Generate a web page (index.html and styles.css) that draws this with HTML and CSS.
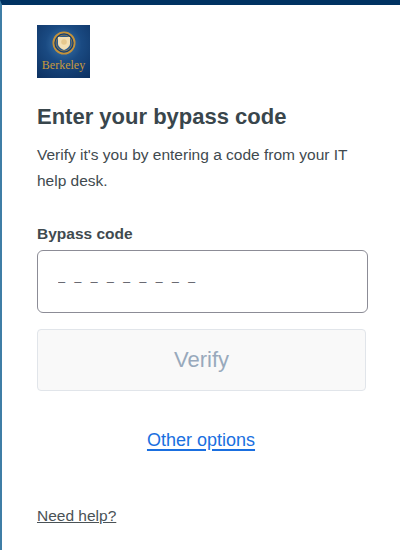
FILE: index.html
```html
<!DOCTYPE html>
<html lang="en">
<head>
<meta charset="utf-8">
<title>Enter your bypass code</title>
<link rel="stylesheet" href="styles.css">
</head>
<body>
<main class="card">
  <div class="logo">
    <svg class="seal" viewBox="0 0 28 28" aria-hidden="true">
      <circle cx="14" cy="14" r="10.600" fill="#123f76" stroke="#c4923a" stroke-width="1.800"/>
      <circle cx="14" cy="14" r="8" fill="#2c5a8c" stroke="#a9853f" stroke-width="0.700"/>
      <path d="M8 8h12v6.500c0 3.200-3 5.200-6 6.500-3-1.300-6-3.300-6-6.500z" fill="#f3dfb4"/>
      <circle cx="14" cy="13" r="2.800" fill="#e6c88e"/>
    </svg>
    <span class="logo-text">Berkeley</span>
  </div>
  <h1 class="title">Enter your bypass code</h1>
  <p class="intro">Verify it's you by entering a code from your IT help desk.</p>
  <label class="label" for="code">Bypass code</label>
  <input class="input" id="code" type="text" placeholder="– – – – – – – – –">
  <button class="verify" type="button" disabled>Verify</button>
  <a class="options" href="#">Other options</a>
  <a class="help" href="#">Need help?</a>
</main>
</body>
</html>
```
FILE: styles.css
```css
* { box-sizing: border-box; }
html, body { margin: 0; height: 100%; }
body {
  background: #fff;
  font-family: "Liberation Sans", Arial, sans-serif;
  color: #3f4a4f;
}
.card {
  height: 550px;
  overflow: hidden;
  border-top: 5px solid #003262;
  border-left: 2px solid #3f7ea6;
  padding: 20px 32px 0 35px;
  display: flex;
  flex-direction: column;
  align-items: flex-start;
}
.logo {
  width: 53px;
  height: 53px;
  background: radial-gradient(circle at 50% 36%, #3f79ad 0, #1a4a82 42%, #0c3060 100%);
  display: flex;
  flex-direction: column;
  align-items: center;
  padding-top: 4px;
}
.seal { width: 28px; height: 28px; display: block; }
.logo-text {
  font-family: "Liberation Serif", serif;
  font-size: 12px;
  line-height: 15px;
  margin-top: 1px;
  color: #c89a3e;
}
.title {
  margin: 25px 0 0;
  font-size: 22px;
  line-height: 28px;
  font-weight: 700;
  color: #39464c;
}
.intro {
  margin: 11px 0 0;
  font-size: 15.500px;
  line-height: 26px;
  width: 325px;
}
.label {
  margin-top: 30px;
  font-size: 15.500px;
  line-height: 20px;
  font-weight: 700;
}
.input {
  margin-top: 6px;
  width: 331px;
  height: 63px;
  flex: none;
  border: 1px solid #8c8c96;
  border-radius: 6px;
  padding: 0 20px;
  font: 13px "Liberation Sans", Arial, sans-serif;
  letter-spacing: 2.700px;
  outline: none;
}
.input::placeholder { color: #5f5f69; opacity: 1; }
.verify {
  margin-top: 16px;
  width: 329px;
  height: 62px;
  flex: none;
  background: #f9f9f9;
  border: 1px solid #e1e5ea;
  border-radius: 4px;
  font: 22px "Liberation Sans", Arial, sans-serif;
  color: #98a9bc;
}
.options {
  align-self: center;
  margin: 37px 0 0 -3px;
  font-size: 18px;
  line-height: 24px;
  color: #1a6fe0;
  text-decoration-thickness: 1.500px;
  text-underline-offset: 3px;
}
.help {
  margin-top: 54px;
  font-size: 15.500px;
  line-height: 20px;
  color: #4a5256;
}
```
